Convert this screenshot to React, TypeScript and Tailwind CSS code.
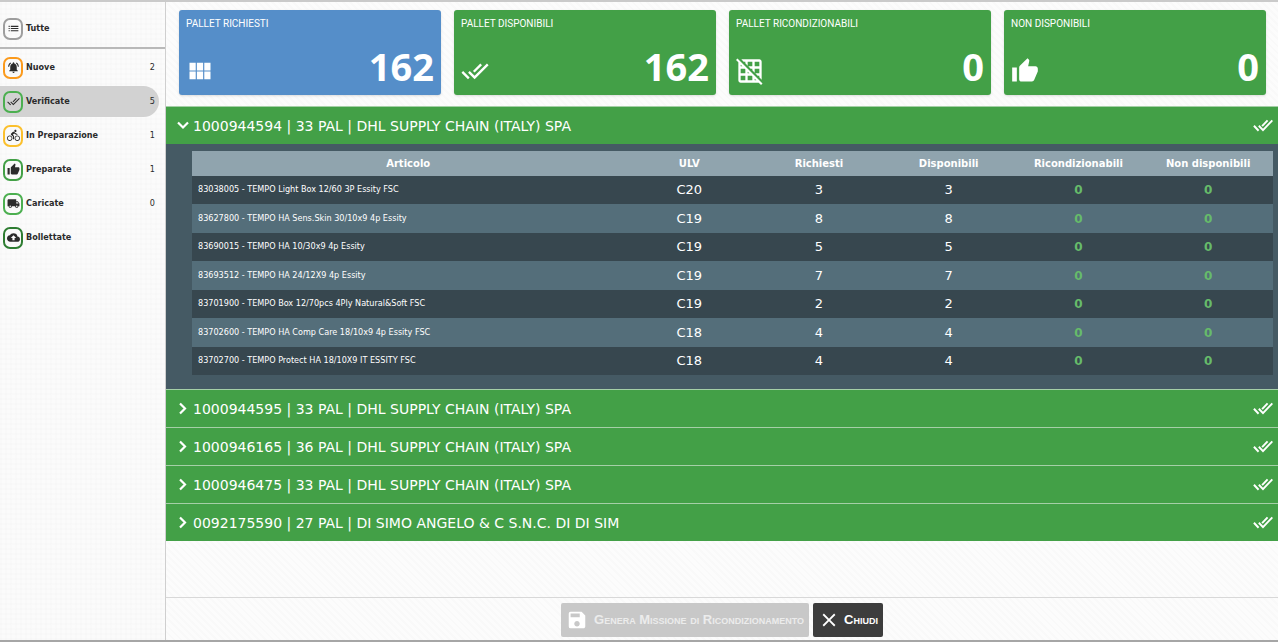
import React, { useState } from 'react';
import type { IconType } from 'react-icons';
import {
  MdBackup,
  MdClose,
  MdDirectionsBike,
  MdDoneAll,
  MdGridOff,
  MdList,
  MdLocalShipping,
  MdNotificationsActive,
  MdSave,
  MdThumbUp,
  MdViewModule,
} from 'react-icons/md';

interface StatusItem {
  label: string;
  count?: number;
  icon: IconType;
  border: string;
}

interface Summary {
  title: string;
  value: number;
  icon: IconType;
  color: string;
}

interface Article {
  name: string;
  ulv: string;
  requested: number;
  available: number;
}

interface Order {
  id: string;
  title: string;
  articles: Article[];
}

const statuses: StatusItem[] = [
  { label: 'Nuove', count: 2, icon: MdNotificationsActive, border: 'border-[#fb9a1c]' },
  { label: 'Verificate', count: 5, icon: MdDoneAll, border: 'border-[#4caf50]' },
  { label: 'In Preparazione', count: 1, icon: MdDirectionsBike, border: 'border-[#fbc02d]' },
  { label: 'Preparate', count: 1, icon: MdThumbUp, border: 'border-[#43a047]' },
  { label: 'Caricate', count: 0, icon: MdLocalShipping, border: 'border-[#4caf50]' },
  { label: 'Bollettate', icon: MdBackup, border: 'border-[#2e7d32]' },
];

const summaries: Summary[] = [
  { title: 'PALLET RICHIESTI', value: 162, icon: MdViewModule, color: 'bg-[#558ec9]' },
  { title: 'PALLET DISPONIBILI', value: 162, icon: MdDoneAll, color: 'bg-[#43a047]' },
  { title: 'PALLET RICONDIZIONABILI', value: 0, icon: MdGridOff, color: 'bg-[#43a047]' },
  { title: 'NON DISPONIBILI', value: 0, icon: MdThumbUp, color: 'bg-[#43a047]' },
];

const orders: Order[] = [
  {
    id: '1000944594',
    title: '1000944594 | 33 PAL | DHL SUPPLY CHAIN (ITALY) SPA',
    articles: [
      { name: '83038005 - TEMPO Light Box 12/60 3P Essity FSC', ulv: 'C20', requested: 3, available: 3 },
      { name: '83627800 - TEMPO HA Sens.Skin 30/10x9 4p Essity', ulv: 'C19', requested: 8, available: 8 },
      { name: '83690015 - TEMPO HA 10/30x9 4p Essity', ulv: 'C19', requested: 5, available: 5 },
      { name: '83693512 - TEMPO HA 24/12X9 4p Essity', ulv: 'C19', requested: 7, available: 7 },
      { name: '83701900 - TEMPO Box 12/70pcs 4Ply Natural&Soft FSC', ulv: 'C19', requested: 2, available: 2 },
      { name: '83702600 - TEMPO HA Comp Care 18/10x9 4p Essity FSC', ulv: 'C18', requested: 4, available: 4 },
      { name: '83702700 - TEMPO Protect HA 18/10X9 IT ESSITY FSC', ulv: 'C18', requested: 4, available: 4 },
    ],
  },
  { id: '1000944595', title: '1000944595 | 33 PAL | DHL SUPPLY CHAIN (ITALY) SPA', articles: [] },
  { id: '1000946165', title: '1000946165 | 36 PAL | DHL SUPPLY CHAIN (ITALY) SPA', articles: [] },
  { id: '1000946475', title: '1000946475 | 33 PAL | DHL SUPPLY CHAIN (ITALY) SPA', articles: [] },
  { id: '0092175590', title: '0092175590 | 27 PAL | DI SIMO ANGELO & C S.N.C. DI DI SIM', articles: [] },
];

const columns = ['ULV', 'Richiesti', 'Disponibili', 'Ricondizionabili', 'Non disponibili'];

function StatusIcon({ icon: Icon, border }: { icon: IconType; border: string }) {
  return (
    <span className={`flex h-[22px] w-5 shrink-0 items-center justify-center rounded-[7px] border-2 ${border}`}>
      <Icon size={13} className="shrink-0" />
    </span>
  );
}

function Chevron({ open }: { open: boolean }) {
  return (
    <svg viewBox="0 0 18 18" className="mr-px size-[18px] shrink-0" fill="none" stroke="currentColor" strokeWidth="2.2">
      <path d={open ? 'M4 5.5l5 5 5-5' : 'M6 3.5l5 5-5 5'} />
    </svg>
  );
}

function DoubleCheck() {
  return (
    <svg viewBox="0 0 24 24" className="size-5 shrink-0" fill="none" stroke="currentColor" strokeWidth="2.3">
      <path d="M1.1 11.7l5.6 6M7 11.7l5 5.3L23.2 5.2M10.9 12.1l6.6-6.9" />
    </svg>
  );
}

function Sidebar() {
  const [active, setActive] = useState('Verificate');

  return (
    <aside className="w-[166px] shrink-0 border-r border-[#cfcfcf] bg-[#fbfbfb] bg-[repeating-linear-gradient(0deg,rgba(0,0,0,0.008)_0_2px,transparent_2px_5px),repeating-linear-gradient(90deg,rgba(0,0,0,0.008)_0_2px,transparent_2px_5px)] font-['DejaVu_Sans_Condensed','DejaVu_Sans',sans-serif] text-[9px] text-[#2b2b2b]">
      <div className="border-b-2 border-[#b9b9b9] pt-[11px] pb-[3px]">
        <button onClick={() => setActive('Tutte')} className="flex h-[31px] w-full items-center gap-[3px] pl-[3px] font-bold">
          <StatusIcon icon={MdList} border="border-[#9e9e9e]" />
          Tutte
        </button>
      </div>
      <nav className="flex flex-col gap-[3px] pt-[3px] pr-[6px]">
        {statuses.map((item) => (
          <button
            key={item.label}
            onClick={() => setActive(item.label)}
            className={`flex h-[31px] items-center gap-[3px] rounded-r-full pr-1 pl-[3px] ${active === item.label ? 'bg-[#d2d2d2]' : ''}`}
          >
            <StatusIcon icon={item.icon} border={item.border} />
            <span className="grow text-left font-bold">{item.label}</span>
            <span>{item.count}</span>
          </button>
        ))}
      </nav>
    </aside>
  );
}

function SummaryCard({ title, value, icon: Icon, color }: Summary) {
  return (
    <div className={`flex h-[85px] flex-col justify-between rounded-[3px] px-[7px] pt-[6px] pb-[6px] text-white shadow ${color}`}>
      <h2 className="font-[Roboto,sans-serif] text-[10px] leading-4">{title}</h2>
      <div className="flex items-end justify-between">
        <Icon size={28} className="mb-1" />
        <span className="font-['Open_Sans',sans-serif] text-[38px] leading-[46px] font-bold">{value}</span>
      </div>
    </div>
  );
}

function ArticleTable({ articles }: { articles: Article[] }) {
  return (
    <div className="bg-[#455a64] pt-[7px] pr-[5px] pb-[14px] pl-[26px]">
      <table className="w-full table-fixed border-collapse text-center text-white">
        <thead>
          <tr className="h-[25px] bg-[#90a4ae] text-[10px]">
            <th className="w-2/5 p-0">Articolo</th>
            {columns.map((column) => (
              <th key={column} className="p-0">{column}</th>
            ))}
          </tr>
        </thead>
        <tbody className="text-[13px]">
          {articles.map((article) => (
            <tr key={article.name} className="h-7 bg-[#37474f] even:h-[29px] even:bg-[#546e7a]">
              <td className="truncate p-0 pl-[6px] text-left font-['DejaVu_Sans_Condensed','DejaVu_Sans',sans-serif] text-[9px]">{article.name}</td>
              <td className="p-0">{article.ulv}</td>
              <td className="p-0">{article.requested}</td>
              <td className="p-0">{article.available}</td>
              <td className="p-0 text-xs font-bold text-[#66bb6a]">0</td>
              <td className="p-0 text-xs font-bold text-[#66bb6a]">0</td>
            </tr>
          ))}
        </tbody>
      </table>
    </div>
  );
}

export default function App() {
  const [open, setOpen] = useState('1000944594');

  return (
    <div className="flex min-h-screen border-t-2 border-b-2 border-t-[#cacaca] border-b-[#a6a6a6] bg-[#fcfcfc]">
      <Sidebar />
      <div className="flex min-w-0 grow flex-col bg-[repeating-linear-gradient(45deg,rgba(0,0,0,0.012)_0_2px,transparent_2px_5px)] font-['DejaVu_Sans',sans-serif]">
        <section className="grid grid-cols-4 gap-[13px] px-3 pt-2 pb-[11px] pl-[13px]">
          {summaries.map((summary) => (
            <SummaryCard key={summary.title} {...summary} />
          ))}
        </section>

        <main className="grow">
          {orders.map((order) => {
            const isOpen = open === order.id;
            return (
              <div key={order.id}>
                <button
                  onClick={() => setOpen(isOpen ? '' : order.id)}
                  aria-expanded={isOpen}
                  className="flex h-[38px] w-full items-center border-t border-[#a5cfa7] bg-[#43a047] pr-[5px] pl-2 text-sm text-white"
                >
                  <Chevron open={isOpen} />
                  <span className="grow truncate text-left">{order.title}</span>
                  <DoubleCheck />
                </button>
                {isOpen && order.articles.length > 0 && <ArticleTable articles={order.articles} />}
              </div>
            );
          })}
        </main>

        <footer className="flex justify-center gap-1 border-t border-[#d8d8d8] pt-[5px] pb-[3px] font-['Liberation_Sans',sans-serif] text-[13px] font-bold text-white [font-variant:small-caps]">
          <button disabled className="flex h-[34px] items-center gap-[6px] rounded-[2px] bg-[#c8c8c8] px-[5px] text-[#ececec]">
            <MdSave size={22} className="text-white" />
            Genera Missione di Ricondizionamento
          </button>
          <button className="flex h-[34px] items-center gap-1 rounded-[2px] bg-[#3d3d3d] px-[5px]">
            <MdClose size={22} />
            Chiudi
          </button>
        </footer>
      </div>
    </div>
  );
}
